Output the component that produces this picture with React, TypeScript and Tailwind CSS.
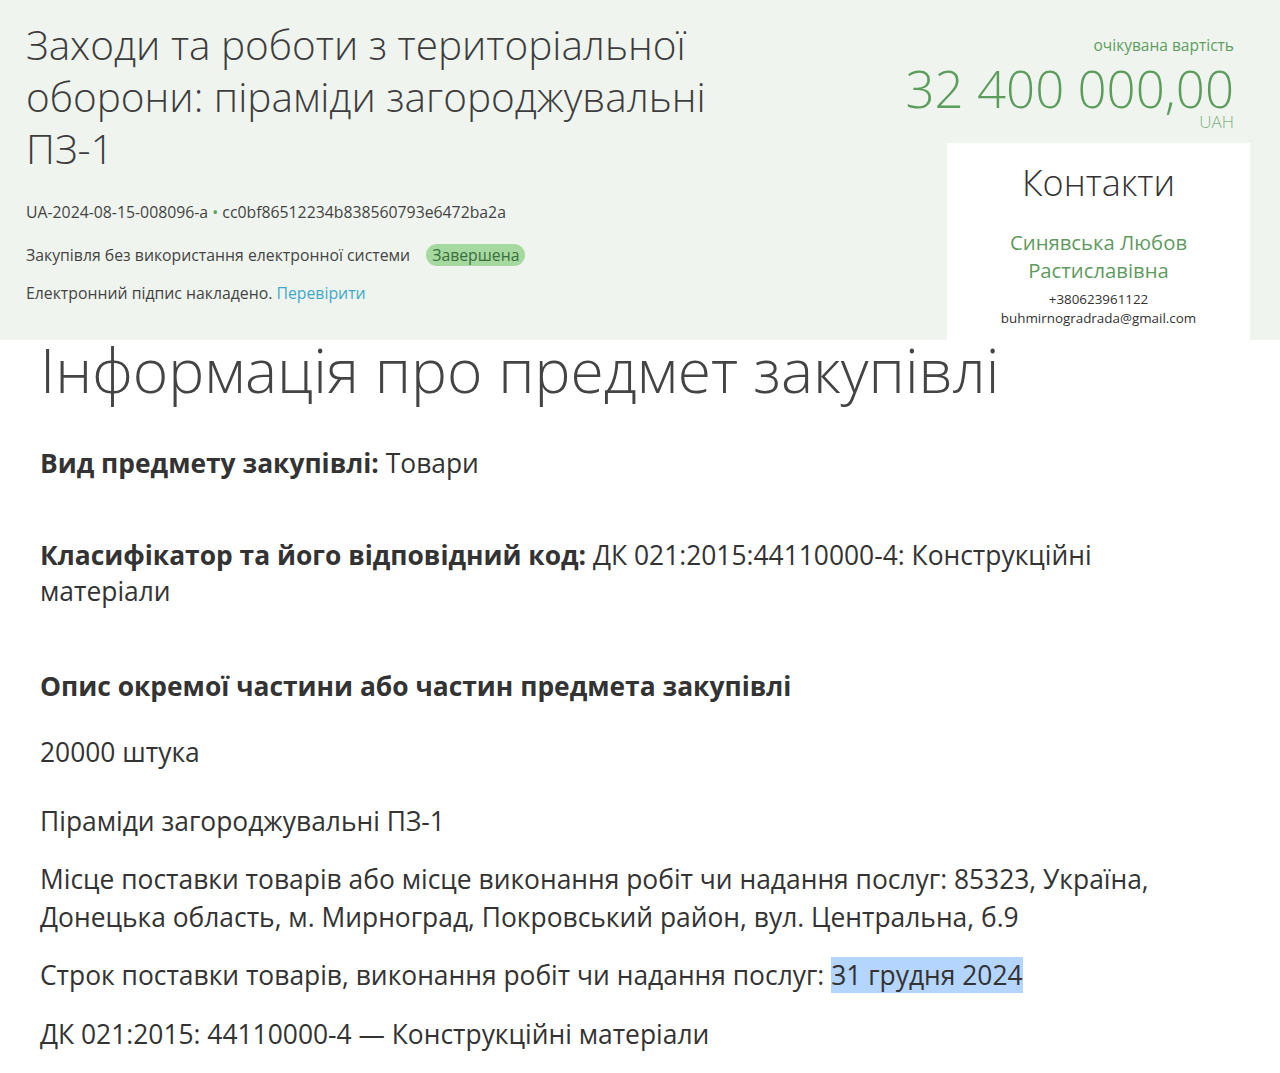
export default function App() {
  return (
    <div className="w-[1280px] h-[1073px] overflow-hidden bg-white font-['Open_Sans',sans-serif] text-[#333]">
      {/* header block */}
      <div className="h-[340px] bg-[#eff4ef] flex justify-between overflow-hidden">
        <div className="pl-[26px] pt-[19px]">
          <h1 className="text-[40.5px] leading-[52px] font-light text-[#3d3d3d] w-[720px]">
            Заходи та роботи з територіальної оборони: піраміди загороджувальні ПЗ-1
          </h1>
          <div className="mt-[27px] text-[15.8px] leading-[20px] text-[#444]">
            UA-2024-08-15-008096-a <span className="text-[#5f9e5f]">•</span> cc0bf86512234b838560793e6472ba2a
          </div>
          <div className="mt-[22px] flex items-center text-[15.8px] leading-[22px] text-[#444]">
            <span>Закупівля без використання електронної системи</span>
            <span className="ml-[16px] rounded-full bg-[#a6d9a0] px-[6px] text-[#3b6e3b]">Завершена</span>
          </div>
          <div className="mt-[16px] text-[15.8px] leading-[22px] text-[#444]">
            Електронний підпис накладено. <span className="text-[#3fa9c9]">Перевірити</span>
          </div>
        </div>
        <div className="w-[303px] mr-[30px] pt-[35px] flex flex-col">
          <div className="pr-[16px] flex flex-col items-end">
            <div className="text-[15.5px] leading-[20px] text-[#5f9e5f]">очікувана вартість</div>
            <div className="mt-[8px] text-[51px] leading-[50px] font-light text-[#5c9c5c] whitespace-nowrap">32 400 000,00</div>
            <div className="mt-[0px] text-[17px] leading-[18px] font-light text-[#7fb27f]">UAH</div>
          </div>
          <div className="mt-[12px] flex-1 bg-white pt-[16px] text-center">
            <div className="text-[36px] leading-[48px] font-light text-[#333]">Контакти</div>
            <div className="mt-[21px] text-[20.3px] leading-[28px] text-[#5f9a5f]">
              Синявська Любов<br />Растиславівна
            </div>
            <div className="mt-[6px] text-[13.4px] leading-[19px] text-[#333]">+380623961122</div>
            <div className="text-[13.4px] leading-[19px] text-[#333]">buhmirnogradrada@gmail.com</div>
          </div>
        </div>
      </div>

      {/* lower block */}
      <div className="px-[40px] w-[1240px]">
        <h2 className="text-[60.5px] leading-[64px] font-light text-[#444] -mt-[2px]">
          Інформація про предмет закупівлі
        </h2>
        <div className="mt-[43px] text-[26.4px] leading-[36px]">
          <b className="font-bold">Вид предмету закупівлі:</b> Товари
        </div>
        <div className="mt-[56px] text-[26.4px] leading-[36px]">
          <b className="font-bold">Класифікатор та його відповідний код:</b> ДК 021:2015:44110000-4: Конструкційні матеріали
        </div>
        <div className="mt-[59px] text-[26.4px] leading-[36px] font-bold">
          Опис окремої частини або частин предмета закупівлі
        </div>
        <div className="mt-[30px] text-[26.4px] leading-[36px]">20000 штука</div>
        <div className="mt-[33px] text-[26.4px] leading-[36px]">Піраміди загороджувальні ПЗ-1</div>
        <div className="mt-[21px] text-[26.4px] leading-[38px]">
          Місце поставки товарів або місце виконання робіт чи надання послуг: 85323, Україна, Донецька область, м. Мирноград, Покровський район, вул. Центральна, б.9
        </div>
        <div className="mt-[20px] text-[26.4px] leading-[38px]">
          Строк поставки товарів, виконання робіт чи надання послуг: <span className="bg-[#b4d5fd]">31 грудня 2024</span>
        </div>
        <div className="mt-[21px] text-[26.4px] leading-[38px]">ДК 021:2015: 44110000-4 — Конструкційні матеріали</div>
      </div>
    </div>
  )
}
